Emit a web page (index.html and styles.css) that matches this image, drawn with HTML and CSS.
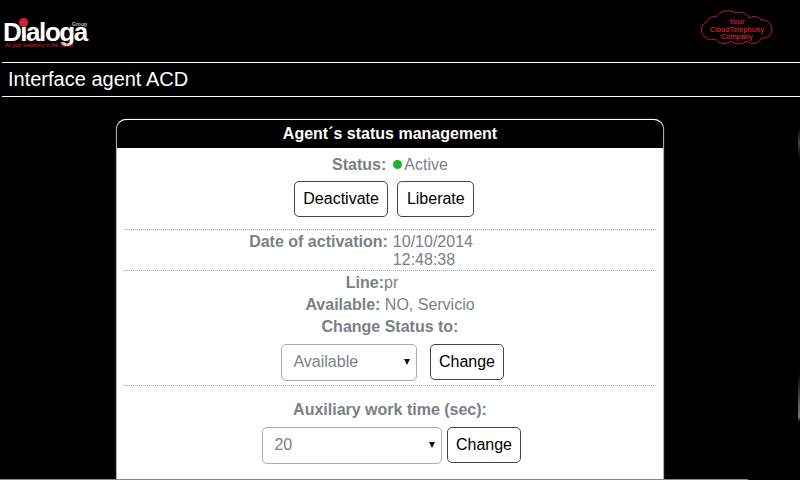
FILE: index.html
```html
<!DOCTYPE html>
<html lang="en">
<head>
<meta charset="utf-8">
<title>Interface agent ACD</title>
<link rel="stylesheet" href="styles.css">
</head>
<body>
<header class="top">
  <div class="logo">
    <span class="logo-dot"></span>
    <span class="logo-group">Group</span>
    <span class="logo-name">Dialoga</span>
    <span class="logo-tag">All your telephony in the Cloud</span>
  </div>
  <div class="cloud">
    <svg class="cloud-shape" viewBox="0 0 72 36" width="72" height="36" aria-hidden="true">
      <path d="M4 27C-1 24 -1 14 6 12C7 8 11 6 15 7C18 1 29 -1 35 3C40 1 46 3 48 8C53 5 59 7 60 10C66 9 71 14 71 19C71 25 66 29 61 28C58 34 50 35 46 31C42 35 34 35 30 31C26 35 17 34 15 29C11 30 7 30 4 27Z"/>
    </svg>
    <span class="cloud-text">Your<br>CloudTelephony<br>Company</span>
  </div>
</header>
<h1 class="title">Interface agent ACD</h1>
<main class="card">
  <h2 class="card-head">Agent´s status management</h2>
  <section class="group group-status">
    <div class="row"><b>Status:</b><span class="dot"></span><span class="active">Active</span></div>
    <div class="buttons">
      <button class="btn" type="button">Deactivate</button>
      <button class="btn" type="button">Liberate</button>
    </div>
  </section>
  <section class="group group-date">
    <b>Date of activation:</b>
    <span class="date">10/10/2014<br>12:48:38</span>
  </section>
  <section class="group group-line">
    <div class="line-row line-short"><b>Line:</b>pr</div>
    <div class="line-row"><b>Available:</b> NO, Servicio</div>
    <div class="line-row"><b>Change Status to:</b></div>
    <div class="controls controls-status">
      <div class="select select-status">Available<span class="caret"></span></div>
      <button class="btn btn-change" type="button">Change</button>
    </div>
  </section>
  <section class="group group-aux">
    <div class="line-row"><b>Auxiliary work time (sec):</b></div>
    <div class="controls controls-aux">
      <div class="select select-aux">20<span class="caret"></span></div>
      <button class="btn btn-change" type="button">Change</button>
    </div>
  </section>
</main>
<div class="bottom-line"></div>
<div class="edge-glow"></div>
<div class="edge-glow edge-glow-top"></div>
</body>
</html>
```
FILE: styles.css
```css
html, body { margin: 0; padding: 0; }
body {
  width: 800px;
  height: 480px;
  overflow: hidden;
  position: relative;
  background: #000;
  font-family: "Liberation Sans", Arial, sans-serif;
  color: #7b7f88;
  font-size: 16px;
}
.top {
  height: 62px;
  display: flex;
  justify-content: space-between;
  align-items: flex-start;
}
.logo {
  position: relative;
  width: 92px;
  height: 50px;
  margin-left: 3px;
}
.logo-name {
  position: absolute;
  left: 0;
  top: 17px;
  color: #fff;
  font-weight: 700;
  font-size: 26px;
  line-height: 30px;
  letter-spacing: -1.45px;
}
.logo-dot {
  position: absolute;
  left: 16px;
  top: 18px;
  width: 9px;
  height: 9px;
  border-radius: 50%;
  background: #d2232f;
  z-index: 1;
}
.logo-group {
  position: absolute;
  left: 69px;
  top: 21px;
  color: #bbb;
  font-size: 5px;
  line-height: 6px;
  font-weight: 700;
}
.logo-tag {
  position: absolute;
  left: 2px;
  top: 42px;
  color: #e0202c;
  font-size: 5px;
  line-height: 6px;
  white-space: nowrap;
}
.cloud {
  position: relative;
  width: 72px;
  height: 36px;
  margin: 10px 27px 0 0;
}
.cloud-shape {
  display: block;
  overflow: visible;
  fill: none;
  stroke: #c01c28;
  stroke-width: 1;
}
.cloud-text {
  position: absolute;
  left: 0;
  right: 0;
  top: 8px;
  text-align: center;
  color: #c4202c;
  font-size: 7px;
  line-height: 7.5px;
  font-weight: 700;
}
.title {
  margin: 0 0 22px 2px;
  height: 33px;
  padding-left: 6px;
  border-top: 1px solid #fff;
  border-bottom: 1px solid #fff;
  color: #fff;
  font-size: 20px;
  font-weight: 400;
  line-height: 33px;
}
.card {
  box-sizing: border-box;
  width: 548px;
  height: 361px;
  margin-left: 116px;
  border: 1px solid #aaa;
  border-top-color: #fff;
  border-bottom: 0;
  border-radius: 10px 10px 0 0;
  background: #fff;
  box-shadow: 0 0 1px rgba(255, 255, 255, .8);
  overflow: hidden;
}
.card-head {
  margin: 0;
  height: 28px;
  background: #000;
  color: #fff;
  font-size: 16px;
  font-weight: 700;
  line-height: 27px;
  text-align: center;
}
.group {
  margin: 0 7px;
  border-bottom: 1px dotted #aaa;
}
.group-aux { border-bottom: 0; }
b { font-weight: 700; }
.group-status { height: 81px; }
.row {
  height: 32px;
  padding-top: 1px;
  display: flex;
  justify-content: center;
  align-items: center;
}
.dot {
  width: 9px;
  height: 9px;
  border-radius: 50%;
  background: #22b01e;
  margin: 0 2px 1px 7px;
}
.buttons {
  display: flex;
  justify-content: center;
  gap: 9px;
  margin: 0 12px 0 0;
}
.btn {
  height: 36px;
  padding: 0 8.5px;
  background: #fff;
  border: 1px solid #444;
  border-radius: 5px;
  color: #000;
  font: 16px "Liberation Sans", Arial, sans-serif;
}
.btn-change { padding: 0 7.5px; }
.group-date {
  height: 40px;
  display: flex;
  justify-content: center;
  gap: 5px;
  line-height: 18px;
}
.group-date b { margin-top: 3px; }
.date { margin-top: 3px; width: 138px; }
.group-line { height: 115px; padding-top: 1px; box-sizing: border-box; }
.line-row {
  height: 22px;
  line-height: 22px;
  text-align: center;
}
.line-short { padding-right: 36px; }
.controls {
  display: flex;
  justify-content: center;
  align-items: flex-start;
}
.controls-status { gap: 13px; margin: 6px 0 0 5px; }
.controls-aux { gap: 5px; margin: 6px 0 0 3px; }
.select {
  position: relative;
  box-sizing: border-box;
  height: 37px;
  padding-left: 11px;
  border: 1px solid #aaa;
  border-radius: 5px;
  line-height: 34px;
  background: #fff;
}
.select-status { width: 136px; }
.select-aux { width: 180px; }
.caret {
  position: absolute;
  right: 6px;
  top: 14px;
  border-left: 3px solid transparent;
  border-right: 3px solid transparent;
  border-top: 6px solid #111;
}
.group-aux { padding-top: 13px; }
.bottom-line {
  position: absolute;
  left: 0;
  bottom: 0;
  width: 748px;
  height: 1px;
  background: #888;
}
.edge-glow {
  position: absolute;
  left: 798px;
  top: 372px;
  width: 2px;
  height: 50px;
  background: linear-gradient(#000, #555 60%, #777 90%, #000);
}
.edge-glow-top {
  top: 128px;
  height: 30px;
  background: linear-gradient(#000, #444 50%, #000);
}
```
